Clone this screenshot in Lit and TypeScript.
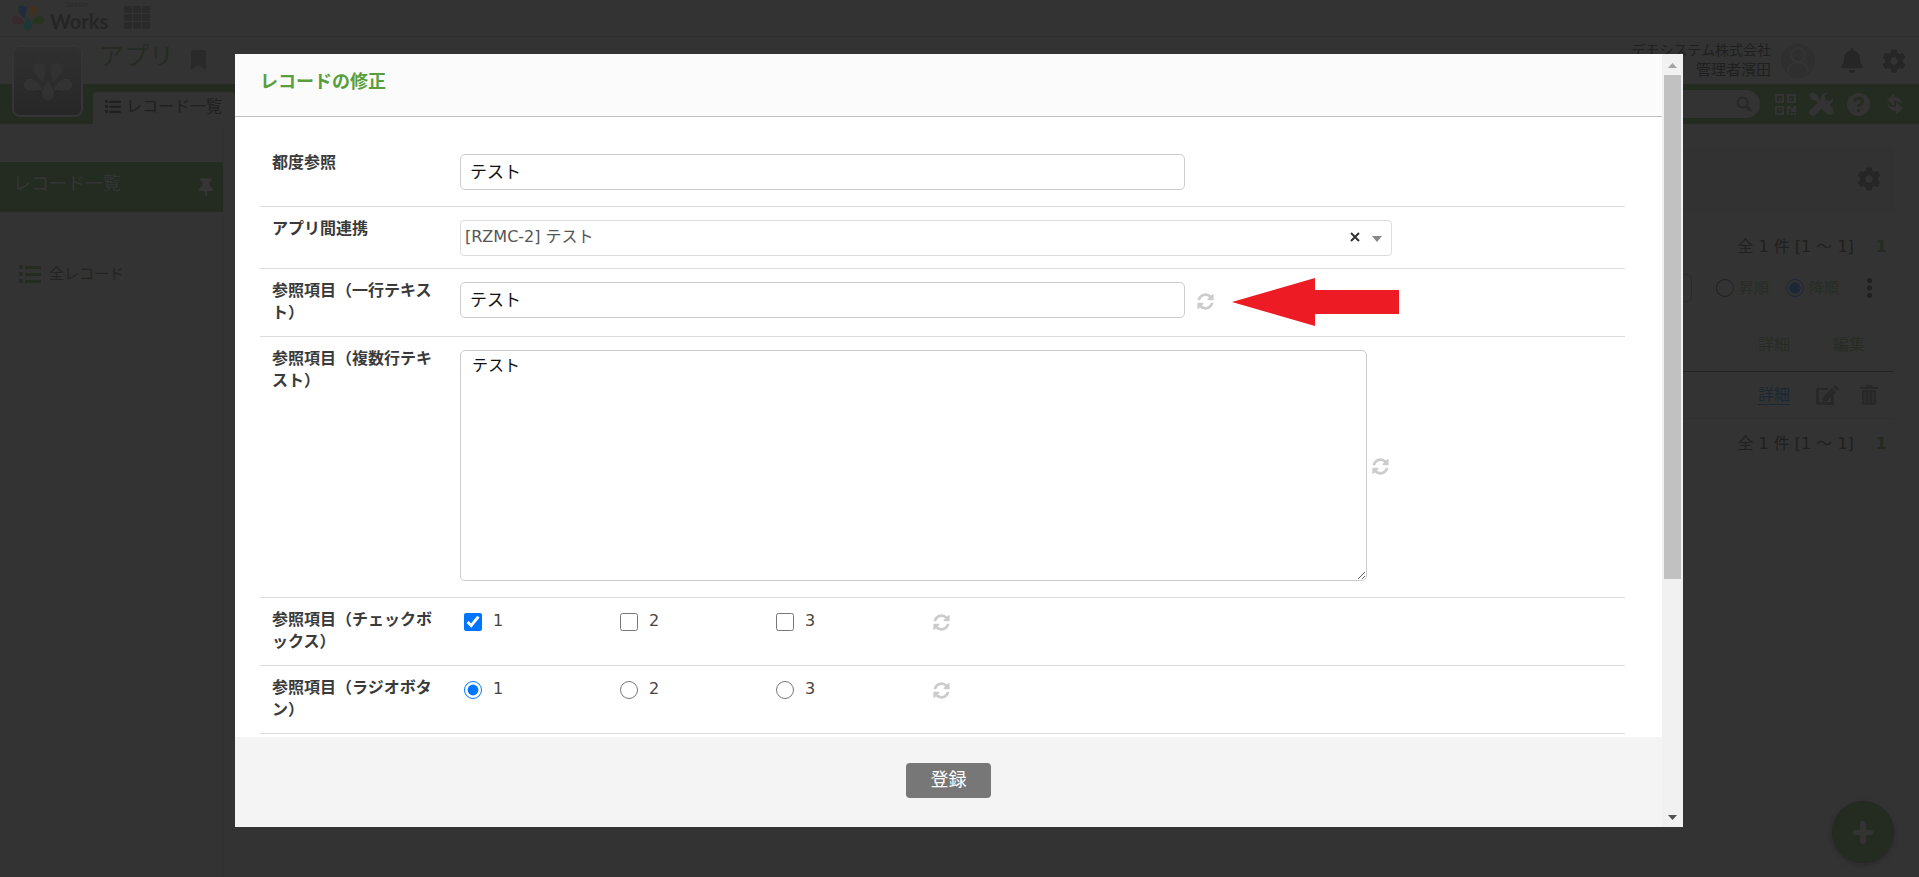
import { LitElement, html, css, svg } from "lit";
import { customElement } from "lit/decorators.js";

const REFRESH =
  "M1639 1056q0 5-1 7-64 268-268 434.5t-478 166.5q-146 0-282.5-55t-243.5-157l-129 129q-19 19-45 19t-45-19-19-45v-448q0-26 19-45t45-19h448q26 0 45 19t19 45-19 45l-137 137q71 66 161 102t187 36q134 0 250-65t186-179q11-17 53-117 8-23 30-23h192q13 0 22.5 9.5t9.5 22.5zm25-800v448q0 26-19 45t-45 19h-448q-26 0-45-19t-19-45 19-45l138-138q-148-137-349-137-134 0-250 65t-186 179q-11 17-53 117-8 23-30 23h-199q-13 0-22.5-9.5t-9.5-22.5v-7q65-268 270-434.5t480-166.5q146 0 284 55.5t245 156.5l130-129q19-19 45-19t45 19 19 45z";
const GEAR =
  "M487.4 315.7l-42.6-24.6c4.3-23.2 4.3-47 0-70.2l42.6-24.6c4.9-2.8 7.1-8.6 5.5-14-11.1-35.6-30-67.8-54.7-94.6-3.8-4.1-10-5.1-14.8-2.3L380.8 110c-17.9-15.4-38.5-27.3-60.8-35.1V25.8c0-5.6-3.9-10.5-9.4-11.7-36.7-8.2-74.3-7.8-109.2 0-5.5 1.2-9.4 6.1-9.4 11.7V75c-22.2 7.9-42.8 19.8-60.8 35.1L88.7 85.5c-4.9-2.8-11-1.9-14.8 2.3-24.7 26.7-43.6 58.9-54.7 94.6-1.7 5.4.6 11.2 5.5 14L67.3 221c-4.3 23.2-4.3 47 0 70.2l-42.6 24.6c-4.9 2.8-7.1 8.6-5.5 14 11.1 35.6 30 67.8 54.7 94.6 3.8 4.1 10 5.1 14.8 2.3l42.6-24.6c17.9 15.4 38.5 27.3 60.8 35.1v49.2c0 5.6 3.9 10.5 9.4 11.7 36.7 8.2 74.3 7.8 109.2 0 5.5-1.2 9.4-6.1 9.4-11.7v-49.2c22.2-7.9 42.8-19.8 60.8-35.1l42.6 24.6c4.9 2.8 11 1.9 14.8-2.3 24.7-26.7 43.6-58.9 54.7-94.6 1.5-5.5-.7-11.3-5.6-14.1zM256 336c-44.1 0-80-35.9-80-80s35.9-80 80-80 80 35.9 80 80-35.9 80-80 80z";
const BELL =
  "M224 512c35.32 0 63.97-28.65 63.97-64H160.03c0 35.35 28.65 64 63.97 64zm215.39-149.71c-19.32-20.76-55.47-51.99-55.47-154.29 0-77.7-54.48-139.9-127.94-155.16V32c0-17.67-14.32-32-31.98-32s-31.98 14.33-31.98 32v20.84C118.56 68.1 64.08 130.3 64.08 208c0 102.3-36.15 133.53-55.47 154.29-6 6.45-8.66 14.16-8.61 21.71.11 16.4 12.98 32 32.1 32h383.8c19.12 0 32-15.6 32.1-32 .05-7.55-2.61-15.27-8.61-21.71z";
const PIN =
  "M298.028 214.267L285.793 96H328c13.255 0 24-10.745 24-24V24c0-13.255-10.745-24-24-24H56C42.745 0 32 10.745 32 24v48c0 13.255 10.745 24 24 24h42.207L85.972 214.267C37.465 236.82 0 277.261 0 328c0 13.255 10.745 24 24 24h136v104.007c0 1.242.289 2.467.845 3.578l24 48c2.941 5.882 11.364 5.893 14.311 0l24-48a8.008 8.008 0 0 0 .845-3.578V352h136c13.255 0 24-10.745 24-24-.001-51.183-37.983-91.42-85.973-113.733z";

/** The five drops of the logo, clockwise from the upper left. */
const DROPS = [
  "M12.500 13C9 10 6.500 8 6.500 4.500a4 4 0 0 1 8 0c0 3-1 5-2 8.500z",
  "M19.500 13c-1-3.500-2-5.500-2-8.500a4 4 0 0 1 8 0c0 3.500-2.500 5.500-6 8.500z",
  "M19.500 18.500c2-3.500 4-7.500 8.500-7.500a4 4 0 0 1 0 8c-3 0-5-.5-8.500-.5z",
  "M16 12c2 4 4 5 4 9a4 4 0 0 1-8 0c0-4 2-5 4-9z",
  "M12.500 18.500C9 18.500 7 19 4 19a4 4 0 0 1 0-8c4.500 0 6.500 4 8.500 7.500z",
];
const DROP_COLOURS = ["#202c3d", "#3f311f", "#27351f", "#1d3735", "#382a2f"];

const icon = (w: number, h: number, viewBox: string, body: unknown) =>
  html`<svg width=${w} height=${h} viewBox=${viewBox} fill="currentColor" aria-hidden="true">${body}</svg>`;

const gear = () => icon(24, 24, "0 0 512 512", svg`<path d=${GEAR} />`);

const list = (w: number, h: number) =>
  icon(w, h, "0 0 22 18", svg`
    <rect x="0" y="0" width="4" height="4" rx="1" /><rect x="0" y="7" width="4" height="4" rx="1" /><rect x="0" y="14" width="4" height="4" rx="1" />
    <rect x="6" y="1" width="16" height="3" rx="1" /><rect x="6" y="8" width="16" height="3" rx="1" /><rect x="6" y="15" width="16" height="3" rx="1" />`);

const baseStyles = css`
  * { box-sizing: border-box; }
  svg { display: block; flex: none; }
  button { font: inherit; color: inherit; background: none; border: 0; padding: 0; display: block; }
  a { color: inherit; text-decoration: none; }
  input, select, textarea { font-family: inherit; }
`;

/** The record list behind the dialog, in its dimmed colours. */
@customElement("record-list-page")
export class RecordListPage extends LitElement {
  static styles = [
    baseStyles,
    css`
      :host { display: block; min-height: 100vh; background: #333; color: #202020; font-size: 16px; line-height: 22px; }
      .top { display: flex; align-items: center; height: 37px; padding: 0 0 2px 12px; border-bottom: 1px solid #2e2e2e; color: #2a2a2a; }
      .brand { display: flex; flex-direction: column; margin-left: 6px; width: 74px; color: #252525; }
      .brand small { font: 7px/8px "Noto Sans", sans-serif; padding-left: 16px; color: #2a2a2a; }
      .brand b { font: 700 20px/24px Lato, sans-serif; }
      .head { display: flex; height: 47px; position: relative; padding: 0 13px 0 99px; align-items: center; }
      .name { margin: 0; font-weight: 400; font-size: 25px; line-height: 40px; color: #262c23; align-self: flex-start; }
      .mark { margin: 0 0 2px 17px; color: #2a2a2a; }
      .appicon { position: absolute; left: 12px; top: 8px; width: 71px; height: 72px; border-radius: 8px; border: 2px solid #353535;
        background: linear-gradient(#303030, #272727); display: grid; place-items: center; color: #323232; }
      .user { margin-left: auto; text-align: right; font-size: 15px; line-height: 20px; padding-bottom: 2px; }
      .user span { display: block; }
      .user .company { font-size: 14px; }
      .avatar { margin: 0 25px 0 9px; color: #2f2f2f; }
      .tools { display: flex; gap: 19px; color: #262626; align-items: center; }
      .bar { display: flex; height: 40px; background: #242b21; padding: 6px 12px 0 93px; align-items: center; color: #333; justify-content: space-between; }
      .tab { display: flex; align-self: flex-end; align-items: center; gap: 5px; width: 142px; height: 32px; background: #333; border-radius: 4px 4px 0 0; padding: 0 0 3px 12px; color: #202020; font-size: 16px; }
      .bartools { display: flex; align-items: center; gap: 13px; height: 28px; margin-bottom: 6px; }
      .search { width: 300px; height: 28px; background: #333; border-radius: 14px; display: flex; align-items: center; justify-content: flex-end; padding-right: 8px; color: #282828; margin-right: 2px; }
      .search input { flex: 1; min-width: 0; border: 0; background: none; outline: 0; }
      .cols { display: grid; grid-template-columns: 224px 1fr; }
      .side { border-right: 1px solid #313131; padding-top: 38px; min-height: 753px; }
      .panel { display: flex; height: 50px; background: #242b21; color: #353535; align-items: center; justify-content: space-between; padding: 0 10px 0 13px; font-size: 18px; }
      .panel span { padding-bottom: 6px; }
      .all { display: flex; align-items: center; gap: 8px; margin-top: 51px; padding-left: 19px; color: #232323; font-size: 15px; }
      .all svg { color: #242b21; }
      .main { padding: 24px 25px 0 24px; }
      .box { display: flex; height: 63px; justify-content: flex-end; align-items: center; background: #323232; border-radius: 4px; padding: 0 13px 2px 0; color: #262626; }
      .count { display: flex; justify-content: flex-end; gap: 22px; padding-right: 7px; line-height: 22px; }
      .count b { color: #242b21; }
      .count.first { margin-top: 25px; }
      .count.last { margin-top: 14px; }
      .sort { display: flex; justify-content: flex-end; align-items: center; gap: 24px; height: 28px; margin-top: 16px; padding-right: 22px; color: #272d24; font-size: 15px; }
      .sort select { appearance: none; width: 160px; height: 28px; border: 1px solid #2c2c2c; border-radius: 5px; background: none; }
      .sort label { display: flex; align-items: center; gap: 5px; margin-right: -7px; line-height: 20px; }
      .sort input { appearance: none; margin: 0; width: 18px; height: 18px; border: 1px solid #202020; border-radius: 50%; }
      .sort input:checked { border: 1px solid #1c2836; background: radial-gradient(circle, #1c2836 5px, transparent 6px); }
      .sort button { margin-left: 11px; color: #202020; }
      table { width: 100%; border-collapse: collapse; margin-top: 19px; table-layout: fixed; }
      th { font-weight: 400; height: 50px; padding: 0 0 2px; border-bottom: 1px solid #232323; color: #272d24; }
      td { height: 47px; padding: 0; border-bottom: 1px solid #303030; color: #282828; text-align: center; }
      .c1 { width: 70px; }
      .c2 { width: 85px; }
      th.c2 { padding-right: 5px; }
      td.c2 { padding-right: 9px; }
      td a { color: #1a2833; text-decoration: underline; text-underline-offset: 4px; }
      .edit { display: flex; gap: 21px; justify-content: center; }
      .fab { position: fixed; right: 25px; bottom: 14px; width: 62px; height: 62px; border-radius: 50%; background: #242b21; color: #333; display: grid; place-items: center; box-shadow: 0 2px 4px #282828; }
    `,
  ];

  render() {
    return html`
      <header>
        <div class="top">
          ${icon(32, 25, "0 0 32 25", DROPS.map((d, i) => svg`<path d=${d} fill=${DROP_COLOURS[i]} />`))}
          <div class="brand"><small>Saaske</small><b>Works</b></div>
          <button aria-label="メニュー">
            ${icon(26, 23, "0 0 26 23", [0, 9, 18].map((x) => [0, 8, 16].map((y) => svg`<rect x=${x} y=${y} width="8" height="7" rx="1.500" />`)))}
          </button>
        </div>
        <div class="head">
          <div class="appicon">${icon(50, 38, "0 0 32 25", DROPS.map((d) => svg`<path d=${d} />`))}</div>
          <h1 class="name">アプリ</h1>
          <div class="mark">${icon(15, 20, "0 0 15 20", svg`<path d="M0 2a2 2 0 0 1 2-2h11a2 2 0 0 1 2 2v18l-7.500-5L0 20z" />`)}</div>
          <div class="user"><span class="company">デモシステム株式会社</span><span>管理者濱田</span></div>
          <div class="avatar">
            ${icon(36, 36, "0 0 36 36", svg`<circle cx="18" cy="18" r="17" /><g fill="none" stroke="#343434" stroke-width="2"><circle cx="18" cy="12" r="7" /><path d="M8 29c-1-13 21-13 20 0" /></g>`)}
          </div>
          <div class="tools">
            <button aria-label="通知">${icon(22, 25, "0 0 448 512", svg`<path d=${BELL} />`)}</button>
            <button aria-label="設定">${gear()}</button>
          </div>
        </div>
        <div class="bar">
          <a class="tab" href="#">${list(16, 13)}レコード一覧</a>
          <div class="bartools">
            <div class="search">
              <input type="search" aria-label="検索" />
              ${icon(16, 16, "0 0 16 16", svg`<g fill="none" stroke="currentColor" stroke-width="2"><circle cx="6.500" cy="6.500" r="5" /><path d="M10 10l5 5" stroke-width="3" /></g>`)}
            </div>
            <button aria-label="QRコード">
              ${icon(21, 21, "0 0 21 21", svg`<g fill="none" stroke="currentColor" stroke-width="2"><path d="M1 1h7v7H1zM13 1h7v7h-7zM1 13h7v7H1z" /></g><path d="M4 4h2v2H4zM15 4h2v2h-2zM4 15h2v2H4zM12 12h4v2h2v-2h3v6h-5v-3h-2v6h-2zM16 19h2v2h-2zM19 19h2v2h-2z" />`)}
            </button>
            <button aria-label="ツール">
              ${icon(25, 24, "0 0 25 24", svg`<path d="M3 0L0 3l3 5h3l5 5 3-3-5-5V3zM13 15l3-3c2-1 4 0 5 1l3 4c2 4-3 8-6 5l-4-4c-1-1-1-2-1-3z" /><path d="M24 6c1 5-4 8-8 7L6 23c-3 3-8-2-5-5L12 8c-1-4 2-8 7-7.500L15.500 4l1 4 4 1z" />`)}
            </button>
            <button aria-label="ヘルプ">
              ${icon(23, 23, "0 0 23 23", svg`<circle cx="11.500" cy="11.500" r="11.500" /><g stroke="#242b21" fill="none" stroke-width="3"><path d="M7.500 9c0-5 8-5 8-.5 0 3-4 2-4 5.500" /><path d="M11.500 16v3" /></g>`)}
            </button>
            <button aria-label="更新">
              ${icon(24, 24, "0 0 24 24", svg`<path d="M4 8l7-7v4c5 0 8 3 8 8-2-3-4-4-8-4v5zM20 16l-7 7v-4c-5 0-8-3-9-8 2 3 5 4 9 4v-5z" />`)}
            </button>
          </div>
        </div>
      </header>
      <div class="cols">
        <nav class="side">
          <div class="panel"><span>レコード一覧</span>${icon(14, 19, "0 0 384 512", svg`<path d=${PIN} />`)}</div>
          <a class="all" href="#">${list(22, 18)}全レコード</a>
        </nav>
        <main class="main">
          <div class="box"><button aria-label="表示設定">${gear()}</button></div>
          <div class="count first"><span>全 1 件 [1 ～ 1]</span><b>1</b></div>
          <div class="sort">
            <select aria-label="並び替え"></select>
            <label><input type="radio" name="order" />昇順</label>
            <label><input type="radio" name="order" checked />降順</label>
            <button aria-label="その他">${icon(5, 20, "0 0 5 20", svg`<circle cx="2.500" cy="2.500" r="2.500" /><circle cx="2.500" cy="10" r="2.500" /><circle cx="2.500" cy="17.500" r="2.500" />`)}</button>
          </div>
          <table>
            <thead><tr><th></th><th class="c1">詳細</th><th class="c2">編集</th></tr></thead>
            <tbody><tr>
              <td></td>
              <td class="c1"><a href="#">詳細</a></td>
              <td class="c2"><div class="edit">
                <button aria-label="編集">${icon(23, 20, "0 0 23 20", svg`<path d="M2 3h11l-2 2H3v12h12v-5l3-3v9a2 2 0 0 1-2 2H2a2 2 0 0 1-2-2V5a2 2 0 0 1 2-2z" /><path d="M16 3l4 4-9 9-5 1 1-5zM17 2l2-2 4 4-2 2z" />`)}</button>
                <button aria-label="削除">${icon(18, 20, "0 0 18 20", svg`<path d="M0 2h5l1-2h6l1 2h5v2H0z" /><path fill-rule="evenodd" d="M2 5h14v13a2 2 0 0 1-2 2H4a2 2 0 0 1-2-2zM4.500 7v11h1V7zM8.500 7v11h1V7zM12.500 7v11h1V7z" />`)}</button>
              </div></td>
            </tr></tbody>
          </table>
          <div class="count last"><span>全 1 件 [1 ～ 1]</span><b>1</b></div>
        </main>
      </div>
      <button class="fab" aria-label="追加">${icon(22, 23, "0 0 22 23", svg`<path d="M8 3a3 3 0 0 1 6 0v6h5a2.500 2.500 0 0 1 0 5h-5v6a3 3 0 0 1-6 0v-6H3a2.500 2.500 0 0 1 0-5h5z" />`)}</button>
    `;
  }
}

@customElement("record-dialog")
export class RecordDialog extends LitElement {
  static styles = [
    baseStyles,
    css`
      :host { display: flex; width: 100%; height: 100%; background: #fff; color: #333; font-size: 16px; line-height: 22px; }
      .sheet { flex: 1; min-width: 0; display: flex; flex-direction: column; }
      .title { flex: none; height: 63px; margin: 0; padding: 14px 25px 0; background: #fbfbfb; border-bottom: 1px solid #c0c0c0; color: #5a9e3c; font-size: 18px; line-height: 28px; }
      .form { flex: 1; min-height: 0; overflow: hidden; padding: 24px 37px 0 25px; }
      .row { display: grid; grid-template-columns: 188px 1fr; padding: 13px 0 10px 12px; border-bottom: 1px solid #dcdcdc; }
      .label { width: 164px; font-weight: 700; color: #3a3a3a; margin-top: -2px; padding-bottom: 2px; }
      .field { display: flex; align-items: center; align-self: start; position: relative; }
      .text, .area { border: 1px solid #ccc; border-radius: 5px; color: #111; background: #fff; outline: 0; }
      .text { width: calc(62% + 3px); height: 36px; padding: 0 9px 3px; margin: 0 11px 6px 0; font-size: 17px; }
      .area { width: calc(78% - 2px); height: 231px; padding: 4px 11px; margin: 0 4px 6px 0; font-size: 16px; line-height: 22px; }
      .icon { color: #ccc; margin-bottom: 4px; }
      .combo { position: relative; width: 80%; margin-bottom: 2px; }
      .combo select { appearance: none; display: block; width: 100%; height: 36px; border: 1px solid #dcdcdc; border-radius: 4px; background: #fff; color: #555; font-size: 16px; padding: 0 60px 4px 4px; }
      .clear { position: absolute; right: 32px; top: 12px; color: #333; }
      .caret { position: absolute; right: 10px; top: 16px; color: #888; pointer-events: none; }
      .choices { padding: 1px 0 0 4px; }
      .choices label { display: flex; align-items: center; gap: 11px; width: 156px; height: 20px; color: #444; }
      .choices label span { padding-bottom: 2px; }
      .choices input { width: 18px; height: 18px; margin: 0; accent-color: #0075ff; }
      .choices .icon { margin: 0; }
      .arrow { position: absolute; left: calc(62% + 50px); top: -4px; color: #ed1c24; }
      .foot { flex: none; height: 90px; background: #f4f4f4; display: grid; place-items: center; padding-bottom: 4px; }
      .submit { width: 85px; height: 35px; border-radius: 4px; background: #777; color: #fff; font-size: 18px; line-height: 31px; padding-bottom: 2px; }
      .scroll { flex: none; width: 21px; background: #f1f1f1; display: flex; flex-direction: column; align-items: center; }
      .scroll svg { margin: 9px 0 7px; }
      .track { flex: 1; width: 17px; }
      .thumb { height: 69%; background: #c1c1c1; }
    `,
  ];

  private refresh() {
    return html`<button type="button" class="icon" aria-label="再取得">${icon(19, 19, "0 0 1792 1792", svg`<path d=${REFRESH} />`)}</button>`;
  }

  private choices(type: "checkbox" | "radio", label: string) {
    return html`<div class="row">
      <div class="label" id=${type}>${label}</div>
      <div class="field choices" role="group" aria-labelledby=${type}>
        ${[1, 2, 3].map((n) => html`<label><input type=${type} name=${type} ?checked=${n === 1} /><span>${n}</span></label>`)}
        ${this.refresh()}
      </div>
    </div>`;
  }

  render() {
    return html`
      <form class="sheet" @submit=${(e: Event) => e.preventDefault()}>
        <h2 class="title">レコードの修正</h2>
        <div class="form">
          <div class="row">
            <label class="label" for="each">都度参照</label>
            <div class="field"><input class="text" id="each" value="テスト" /></div>
          </div>
          <div class="row">
            <label class="label" for="link">アプリ間連携</label>
            <div class="field"><div class="combo">
              <select id="link"><option>[RZMC-2] テスト</option></select>
              <button type="button" class="clear" aria-label="クリア">${icon(10, 10, "0 0 10 10", svg`<path d="M1 1l8 8M9 1l-8 8" stroke="currentColor" stroke-width="2" />`)}</button>
              <span class="caret">${icon(10, 6, "0 0 10 6", svg`<path d="M0 0h10L5 6z" />`)}</span>
            </div></div>
          </div>
          <div class="row">
            <label class="label" for="line">参照項目（一行テキスト）</label>
            <div class="field">
              <input class="text" id="line" value="テスト" />${this.refresh()}
              <span class="arrow">${icon(167, 48, "0 0 167 48", svg`<path d="M0 24L83 0v12h84v24H83v12z" />`)}</span>
            </div>
          </div>
          <div class="row">
            <label class="label" for="multi">参照項目（複数行テキスト）</label>
            <div class="field"><textarea class="area" id="multi" .value=${"テスト"}></textarea>${this.refresh()}</div>
          </div>
          ${this.choices("checkbox", "参照項目（チェックボックス）")}
          ${this.choices("radio", "参照項目（ラジオボタン）")}
        </div>
        <div class="foot"><button class="submit">登録</button></div>
      </form>
      <div class="scroll" aria-hidden="true">
        ${icon(9, 5, "0 0 9 5", svg`<path fill="#a3a3a3" d="M0 5h9L4.500 0z" />`)}
        <div class="track"><div class="thumb"></div></div>
        ${icon(9, 5, "0 0 9 5", svg`<path fill="#505050" d="M0 0h9L4.500 5z" />`)}
      </div>
    `;
  }
}

@customElement("app-root")
export class AppRoot extends LitElement {
  static styles = css`
    :host { display: block; font-family: "DejaVu Sans", "Noto Sans CJK JP", sans-serif; }
    .overlay { box-sizing: border-box; position: fixed; inset: 0; padding: 54px 236px 50px 235px; }
  `;

  render() {
    return html`
      <record-list-page></record-list-page>
      <div class="overlay" role="dialog" aria-modal="true" aria-label="レコードの修正"><record-dialog></record-dialog></div>
    `;
  }
}
